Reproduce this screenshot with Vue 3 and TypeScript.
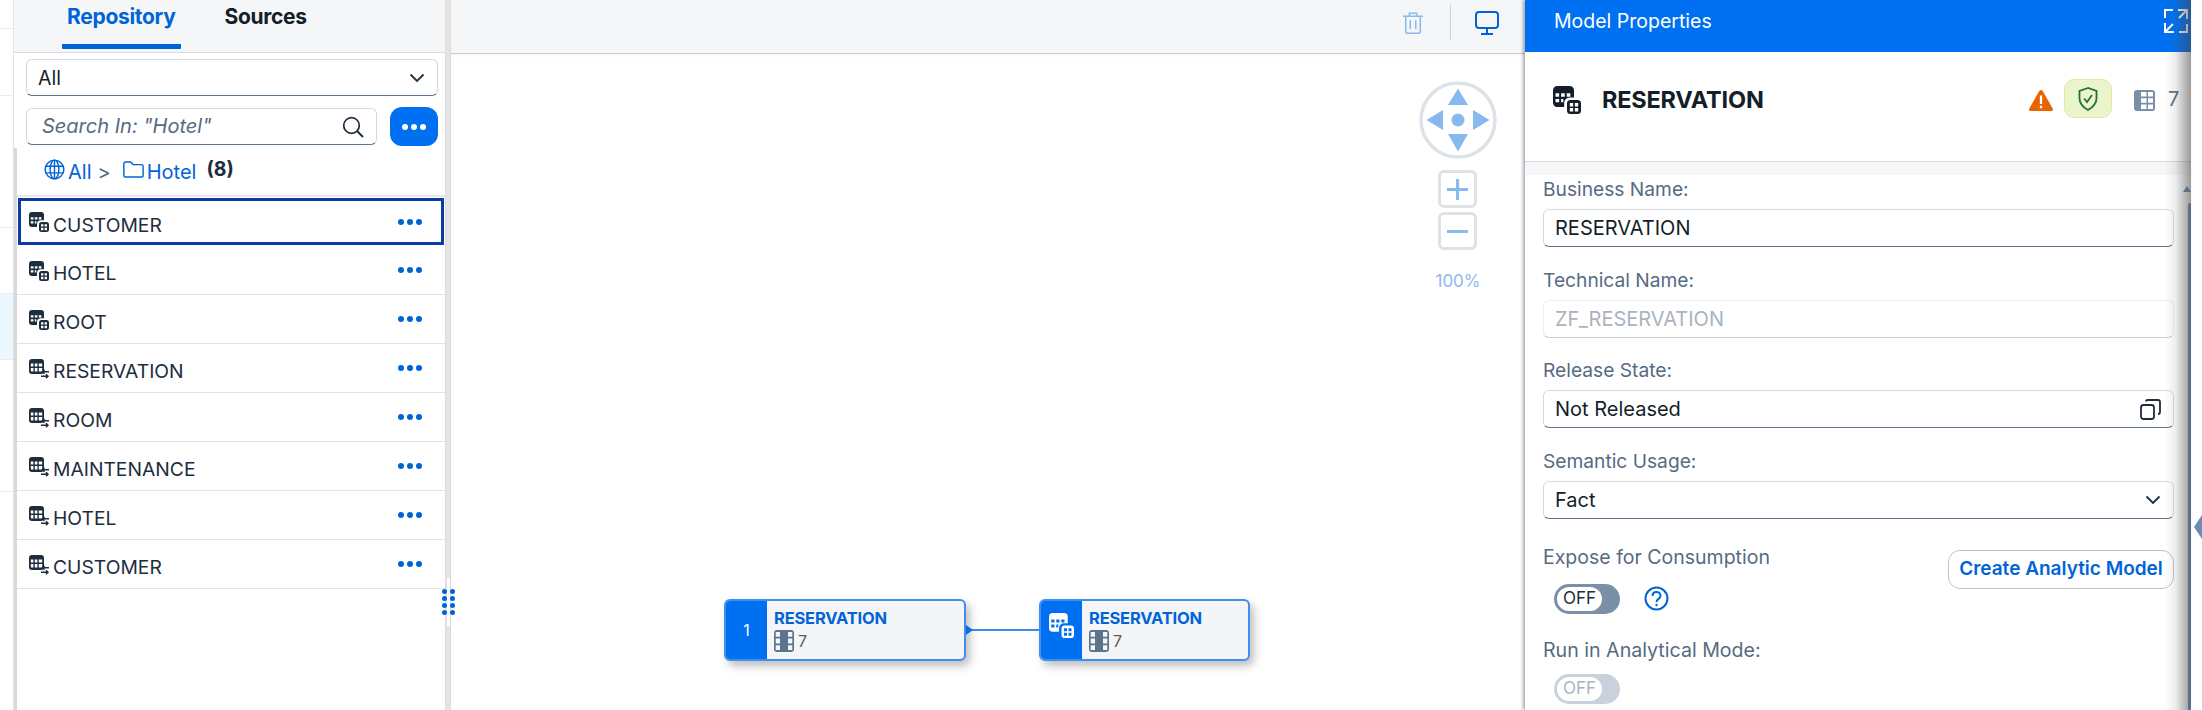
<script setup lang="ts">
interface Row { name: string; kind: 'dim' | 'rel'; selected?: boolean }
const rows: Row[] = [
  { name: 'CUSTOMER', kind: 'dim', selected: true },
  { name: 'HOTEL', kind: 'dim' },
  { name: 'ROOT', kind: 'dim' },
  { name: 'RESERVATION', kind: 'rel' },
  { name: 'ROOM', kind: 'rel' },
  { name: 'MAINTENANCE', kind: 'rel' },
  { name: 'HOTEL', kind: 'rel' },
  { name: 'CUSTOMER', kind: 'rel' },
]
const stripRows: { h: number; tint?: boolean }[] = [
  { h: 29 }, { h: 67 }, { h: 132 }, { h: 66 }, { h: 66, tint: true }, { h: 132 },
]
</script>

<template>
  <div class="app">
    <svg class="defs" aria-hidden="true">
      <symbol id="dim" viewBox="0 0 20 20">
        <path fill="currentColor" fill-rule="evenodd" d="M3 0h9a3 3 0 0 1 3 3v5.2h-3a4 4 0 0 0-4 4V15H3a3 3 0 0 1-3-3V3a3 3 0 0 1 3-3zM1.8 5.2h2.6v2.4H1.8zM5.8 5.2h2.6v2.4H5.8zM9.800 5.200h2.600v2.400H9.800zM1.800 9.200h2.600v2.400H1.800zM5.800 9.200h1.600v2.400H5.800z" />
        <path fill="currentColor" fill-rule="evenodd" d="M12.500 10h5a2.500 2.500 0 0 1 2.500 2.500v5a2.500 2.500 0 0 1-2.500 2.500h-5a2.500 2.500 0 0 1-2.500-2.500v-5a2.500 2.500 0 0 1 2.500-2.500zM12 12.200h2.400v2.400H12zM15.600 12.200H18v2.400h-2.400zM12 15.800h2.400v2.400H12zM15.600 15.800H18v2.400h-2.400z" />
      </symbol>
      <symbol id="rel" viewBox="0 0 20 20">
        <path fill="currentColor" fill-rule="evenodd" d="M3 0h9a3 3 0 0 1 3 3v9a3 3 0 0 1-3 3H3a3 3 0 0 1-3-3V3a3 3 0 0 1 3-3zM1.800 4.500h2.600v3H1.800zM5.800 4.500h2.600v3H5.800zM9.800 4.500h3.400v3H9.800zM1.800 9h2.600v3.600H3a1.200 1.200 0 0 1-1.200-1.200zM5.800 9h2.600v3.600H5.800zM9.800 9h3.400v2.400a1.200 1.200 0 0 1-1.200 1.200H9.800z" />
        <path fill="none" stroke="currentColor" stroke-width="1.500" d="M20 12.800h-6.500M15.500 10.800l-2 2 2 2M12 17.200h7M17 15.200l2 2-2 2" />
      </symbol>
      <symbol id="cols" viewBox="0 0 20 22">
        <path fill="currentColor" fill-rule="evenodd" d="M3 0h14a3 3 0 0 1 3 3v16a3 3 0 0 1-3 3H3a3 3 0 0 1-3-3V3a3 3 0 0 1 3-3zM1.700 2h4.300v4.800H1.700zM14 2h4.300v4.800H14zM1.700 8.600h4.300v4.800H1.700zM14 8.600h4.300v4.800H14zM1.700 15.200h4.300V20H1.700zM14 15.200h4.300V20H14z" />
      </symbol>
      <symbol id="cols2" viewBox="0 0 21 21">
        <path fill="currentColor" fill-rule="evenodd" d="M3 0h15a3 3 0 0 1 3 3v15a3 3 0 0 1-3 3H3a3 3 0 0 1-3-3V3a3 3 0 0 1 3-3zM7 2h5.500v4.500H7zM14 2h5v4.500h-5zM7 8.200h5.500v4.500H7zM14 8.200h5v4.500h-5zM7 14.400h5.500V19H7zM14 14.400h5V19h-5z" />
      </symbol>
    </svg>

    <div class="strip">
      <div v-for="(r, i) in stripRows" :key="i" class="strip-row" :class="{ tint: r.tint }" :style="{ height: r.h + 'px' }"></div>
    </div>

    <aside class="side">
      <div class="tabs">
        <div class="tab active">Repository</div>
        <div class="tab">Sources</div>
      </div>
      <div class="controls">
        <div class="select">
          <span>All</span>
          <svg class="chev" viewBox="0 0 16 10"><path d="M1.500 1.500 8 8l6.500-6.500" fill="none" stroke="currentColor" stroke-width="1.800" /></svg>
        </div>
        <div class="search-row">
          <div class="search">
            <span class="search-text">Search In: "Hotel"</span>
            <svg class="mag" viewBox="0 0 22 22"><circle cx="9.500" cy="9.500" r="7.800" fill="none" stroke="currentColor" stroke-width="1.700" /><path d="m15 15 6 6" stroke="currentColor" stroke-width="1.900" /></svg>
          </div>
          <button class="more-btn"><i></i><i></i><i></i></button>
        </div>
      </div>
      <div class="lower">
        <div class="crumb">
          <svg class="ci" viewBox="0 0 22 22" fill="none" stroke="currentColor" stroke-width="1.500"><circle cx="11" cy="11" r="9.800" /><ellipse cx="11" cy="11" rx="4.600" ry="9.800" /><path d="M1.500 7.500h19M1.500 14.500h19M11 1v20" /></svg>
          <span class="cl">All</span><span class="gt">&gt;</span>
          <svg class="cf" viewBox="0 0 22 18" fill="none" stroke="currentColor" stroke-width="1.500"><path d="M2.500 1h5.500l2.500 2.800h9a1.700 1.700 0 0 1 1.700 1.700V15a2 2 0 0 1-2 2H2.700A2 2 0 0 1 .8 15V2.700A1.700 1.700 0 0 1 2.500 1z" /></svg>
          <span class="cl">Hotel</span><b class="count">(8)</b>
        </div>
        <div v-for="(r, i) in rows" :key="i" class="row" :class="{ selected: r.selected }">
          <svg class="ricon"><use :href="'#' + r.kind" /></svg>
          <span class="rname">{{ r.name }}</span>
          <span class="rdots"><i></i><i></i><i></i></span>
        </div>
      </div>
    </aside>

    <div class="splitter">
      <div class="split-gap"></div>
      <div class="grip"><i v-for="n in 8" :key="n"></i></div>
    </div>

    <main class="canvas">
      <div class="toolbar">
        <svg class="trash" viewBox="0 0 22 24" fill="none" stroke="currentColor" stroke-width="1.700"><path d="M0 4.500h22M7 4.500V1.300h8v3.200M3 4.500v17a1.700 1.700 0 0 0 1.700 1.700h12.600a1.700 1.700 0 0 0 1.700-1.700v-17M8 9v9.500M14 9v9.500" /></svg>
        <span class="tsep"></span>
        <svg class="monitor" viewBox="0 0 24 24" fill="none" stroke="currentColor" stroke-width="2"><rect x="1" y="1" width="22" height="16" rx="3" /><path d="M12 17v5M6 23h12" /></svg>
      </div>

      <svg class="nav" viewBox="0 0 78 78">
        <circle cx="39" cy="39" r="37" fill="#fff" stroke="#dde2e9" stroke-width="3.500" />
        <g fill="#87b8ef">
          <path d="M39 7.500 49 24H29zM39 70.500 29 53h20zM7.500 39 24 29v20zM70.500 39 54 29v20z" />
          <circle cx="39" cy="39" r="6.500" />
        </g>
      </svg>
      <div class="zoomctl plus"><svg viewBox="0 0 24 24"><path d="M12 1v22M1 12h22" stroke="#87b8ef" stroke-width="3" /></svg></div>
      <div class="zoomctl minus"><svg viewBox="0 0 24 24"><path d="M1 12h22" stroke="#87b8ef" stroke-width="3" /></svg></div>
      <div class="pct">100%</div>

      <div class="node n1">
        <div class="nleft">1</div>
        <div class="nbody">
          <div class="ntitle">RESERVATION</div>
          <div class="nmeta"><svg class="ncol"><use href="#cols" /></svg><span>7</span></div>
        </div>
      </div>
      <div class="link"></div>
      <div class="linkarrow"></div>
      <div class="node n2">
        <div class="nleft"><svg class="nicon"><use href="#dim" /></svg></div>
        <div class="nbody">
          <div class="ntitle">RESERVATION</div>
          <div class="nmeta"><svg class="ncol"><use href="#cols" /></svg><span>7</span></div>
        </div>
      </div>
    </main>

    <section class="panel">
      <header class="phead">
        <span>Model Properties</span>
        <svg class="expand" viewBox="0 0 24 24" fill="none" stroke="currentColor" stroke-width="2"><path d="M9 1H1v8M15 23h8v-8M14 1h9v9M23 1l-8 8M1 14v9h9M1 23l8-8" /></svg>
      </header>
      <div class="pinfo">
        <svg class="pdim"><use href="#dim" /></svg>
        <h2 class="ptitle">RESERVATION</h2>
        <svg class="warn" viewBox="0 0 24 21"><path d="M12 0c.8 0 1.300.4 1.700 1l10 17.500c.6 1.200-.1 2.500-1.500 2.500H1.800C.4 21-.3 19.700.3 18.500L10.300 1c.4-.6.900-1 1.700-1z" fill="#e76500" /><path d="M12 5.500v8.500M12 15.700v2.500" stroke="#fff" stroke-width="2.300" /></svg>
        <div class="chip">
          <svg viewBox="0 0 20 24" fill="none" stroke="#256f3a" stroke-width="1.800"><path d="M10 1 1.500 4v7.500c0 5 3.600 8.700 8.500 11.500 4.900-2.800 8.500-6.500 8.500-11.500V4z" /><path d="m6 11.500 3 3.500 5-7" /></svg>
        </div>
        <svg class="pcol"><use href="#cols2" /></svg>
        <span class="pcount">7</span>
      </div>
      <div class="pbody">
        <div class="card">
          <label class="lbl">Business Name:</label>
          <div class="input">RESERVATION</div>
          <label class="lbl">Technical Name:</label>
          <div class="input off">ZF_RESERVATION</div>
          <label class="lbl">Release State:</label>
          <div class="input">
            <span>Not Released</span>
            <svg class="copy" viewBox="0 0 21 21" fill="none" stroke="#1d2d3e" stroke-width="1.800"><rect x="1" y="6" width="13" height="14" rx="2.500" /><path d="M6 2.500A1.500 1.500 0 0 1 7.500 1H18a2 2 0 0 1 2 2v10a2 2 0 0 1-2 2" /></svg>
          </div>
          <label class="lbl">Semantic Usage:</label>
          <div class="input">
            <span>Fact</span>
            <svg class="chev" viewBox="0 0 16 10"><path d="M1.500 1.500 8 8l6.500-6.500" fill="none" stroke="currentColor" stroke-width="1.800" /></svg>
          </div>
          <div class="expose">
            <div>
              <label class="lbl first">Expose for Consumption</label>
              <div class="toggle-row">
                <div class="toggle"><span>OFF</span></div>
                <svg class="help" viewBox="0 0 25 25" fill="none" stroke="currentColor" stroke-width="2"><circle cx="12.500" cy="12.500" r="11" /><path d="M8.500 10c0-2.500 1.800-4 4-4s4 1.500 4 3.700c0 3.300-4 3-4 6.300" /><path d="M12.500 17.800v2.400" /></svg>
              </div>
            </div>
            <button class="create">Create Analytic Model</button>
          </div>
          <label class="lbl run">Run in Analytical Mode:</label>
          <div class="toggle disabled"><span>OFF</span></div>
        </div>
      </div>
      <div class="pshade"></div>
      <div class="scrollup"></div>
      <div class="scrollbar"></div>
    </section>

    <div class="rest"><div class="collapse"></div></div>
  </div>
</template>

<style>
html, body { margin: 0; background: #fff; }
</style>

<style scoped>
* { box-sizing: border-box; }
.app {
  position: relative; display: flex; width: 2202px; height: 710px; overflow: hidden;
  background: #fff; color: #1d2d3e;
  font-family: Inter, "Noto Sans", sans-serif; font-size: 19.500px;
}
.defs { position: absolute; width: 0; height: 0; }
.strip { width: 13px; flex: none; }
.strip-row { border-bottom: 1px solid #ebebeb; }
.strip-row.tint { background: #ebf8ff; }

.side {
  width: 433px; flex: none; display: flex; flex-direction: column;
  border-left: 1px solid #e2e2e2; border-right: 1px solid #dcdcdc;
}
.tabs {
  height: 53px; flex: none; display: flex; padding-left: 48px; gap: 39px;
  background: #f5f6f7; border-bottom: 1px solid #d9d9d9;
}
.tab { height: 49px; padding: 4px 5px 0; font-weight: 700; font-size: 21px; line-height: 26px; letter-spacing: -0.3px; color: #131e29; }
.tab.active { color: #0064d9; border-bottom: 5px solid #0064d9; border-radius: 0 0 1px 1px; }
.controls { padding: 6px 7px 0 12px; height: 95px; flex: none; }
.select, .search, .input {
  display: flex; align-items: center; justify-content: space-between;
  background: #fff; border: 1px solid #d5dae1; border-bottom: 1.500px solid #5b738b; border-radius: 6px;
  color: #131e29;
}
.select { height: 37px; padding: 0 12px 0 11px; }
.chev { width: 16px; height: 10px; color: #1d2d3e; }
.search-row { display: flex; gap: 13px; margin-top: 11px; align-items: center; }
.search { width: 352px; height: 37px; padding: 0 12px 0 15px; font-style: italic; color: #556b82; font-size: 20px; }
.search-text { margin-top: -2px; }
.mag { width: 22px; height: 22px; color: #1d2d3e; }
.more-btn {
  width: 48px; height: 39px; border: 0; border-radius: 12px; background: #0070f2;
  display: flex; align-items: center; justify-content: center; gap: 3px; padding: 0;
}
.more-btn i { width: 6px; height: 6px; border-radius: 50%; background: #fff; }
.lower { flex: 1; border-left: 3px solid #d9d9d9; }
.crumb {
  height: 49px; display: flex; align-items: center; padding-left: 27px;
  border-bottom: 2px solid #e8e8e8; color: #0064d9; font-size: 20px;
}
.ci { width: 21px; height: 21px; margin-top: -5px; flex: none; }
.cl { margin-left: 3px; }
.gt { color: #556b82; margin: 0 12px 0 6px; }
.cf { width: 21px; height: 17px; margin-top: -5px; flex: none; }
.count { color: #1d2d3e; margin-left: 10px; font-size: 19.500px; margin-top: -5px; }
.row {
  position: relative; height: 49px; display: flex; align-items: center; padding: 8px 23px 0 12px;
  border-bottom: 1px solid #e2e2e2; font-size: 19.300px;
}
.row.selected { outline: 3px solid #0a3ba8; outline-offset: -4px; border-bottom: 0; }
.ricon { width: 20px; height: 20px; flex: none; color: #1d2d3e; margin-top: -7px; }
.rname { margin-left: 4px; flex: 1; margin-top: -2px; }
.rdots { display: flex; gap: 3px; margin-top: -8px; }
.rdots i { width: 6px; height: 6px; border-radius: 50%; background: #0064d9; }

.splitter { width: 5px; flex: none; position: relative; z-index: 2; background: #e4e4e4; border-right: 1px solid #dcdcdc; }
.split-gap { position: absolute; left: 1px; top: 578px; width: 3px; height: 48px; background: #fff; }
.grip {
  position: absolute; left: -4px; top: 589px; width: 13px; display: grid;
  grid-template-columns: 5px 5px; column-gap: 3px; row-gap: 2px;
}
.grip i { width: 5px; height: 5px; border-radius: 50%; background: #0064d9; }

.canvas { position: relative; width: 1074px; flex: none; background: #fff; }
.toolbar {
  height: 54px; display: flex; align-items: flex-start; justify-content: flex-end; padding: 11px 26px 0 0;
  background: #f5f6f7; border-bottom: 1px solid #c5cdd6; box-shadow: 0 2px 3px rgba(0,0,0,.03);
}
.trash { width: 20px; height: 24px; color: #8ab8ef; }
.tsep { width: 1px; height: 36px; margin: -7px 24px 0 27px; background: #ccd2d8; }
.monitor { width: 24px; height: 24px; color: #0064d9; }
.nav { position: absolute; left: 968px; top: 81px; width: 78px; height: 78px; }
.zoomctl {
  position: absolute; left: 987px; width: 39px; height: 38px; border: 3px solid #dde2e9; border-radius: 6px;
  background: #fff; display: flex; align-items: center; justify-content: center;
}
.zoomctl svg { width: 23px; height: 23px; }
.plus { top: 170px; }
.minus { top: 212px; }
.pct { position: absolute; left: 968px; width: 78px; top: 270px; text-align: center; color: #8ab8ef; font-size: 17px; line-height: 22px; }

.node {
  position: absolute; top: 599px; height: 62px; display: flex; background: #f4f5f7;
  border: 2px solid #3d8ff0; border-radius: 6px; box-shadow: 4px 5px 9px rgba(0,0,0,.25); overflow: hidden;
}
.n1 { left: 273px; width: 242px; }
.n2 { left: 588px; width: 211px; }
.nleft {
  width: 41px; flex: none; background: #0070f2; color: #fff; font-size: 16px;
  display: flex; align-items: center; justify-content: center;
}
.nicon { width: 25px; height: 25px; color: #fff; margin-bottom: 10px; }
.nbody { padding: 7px 0 0 7px; }
.ntitle { color: #0064d9; font-weight: 700; font-size: 16.500px; line-height: 20px; letter-spacing: -0.2px; }
.nmeta { display: flex; align-items: center; gap: 4px; color: #5b5b5b; font-size: 16px; line-height: 22px; margin-top: 2px; }
.ncol { width: 20px; height: 22px; color: #5b738b; }
.link { position: absolute; left: 514px; top: 629px; width: 76px; height: 2px; background: #3a8bee; }
.linkarrow { position: absolute; left: 515px; top: 625px; border: 5px solid transparent; border-left: 7px solid #0a6ee8; border-right: 0; }

.panel {
  position: relative; width: 666px; flex: none; display: flex; flex-direction: column;
  background: #fff; box-shadow: -2px 0 3px rgba(60,70,80,.45);
}
.phead {
  height: 52px; flex: none; display: flex; align-items: flex-start; justify-content: space-between;
  padding: 9px 3px 0 29px; background: #0070f2; color: #fff; font-size: 19.500px; line-height: 24px;
}
.expand { width: 24px; height: 24px; }
.pinfo {
  height: 110px; flex: none; display: flex; align-items: center; padding: 0 0 15px 28px;
  border-bottom: 1px solid #d9d9d9;
}
.pdim { width: 28px; height: 28px; color: #131e29; flex: none; margin-top: 2px; }
.ptitle { margin: 2px 0 0 21px; font-size: 23.500px; font-weight: 700; line-height: 24px; flex: 1; letter-spacing: -0.2px; color: #131e29; }
.warn { width: 24px; height: 21px; margin-top: 3px; }
.chip {
  width: 48px; height: 39px; margin: -1px 0 0 11px; border-radius: 10px; background: #ebf5cb; border: 1px solid #dbeda0;
  display: flex; align-items: center; justify-content: center;
}
.chip svg { width: 20px; height: 24px; }
.pcol { width: 21px; height: 21px; color: #788fa6; margin: 3px 0 0 22px; }
.pcount { width: 36px; padding-left: 13px; margin-top: -1px; color: #5b738b; font-size: 20px; }
.pbody { flex: 1; background: linear-gradient(#f5f6f7 13px, #fff 13px); padding: 13px 17px 0 9px; }
.card { background: #fff; border-radius: 14px 14px 0 0; padding: 0 7px 0 9px; height: 100%; margin-right: -7px; }
.lbl { display: block; height: 28px; line-height: 28px; color: #556b82; font-size: 19.200px; white-space: nowrap; }
.input { height: 38px; padding: 0 12px 0 11px; margin: 6px 0 18.500px; font-size: 20px; }
.input.off { color: #a9b4be; border-bottom: 1px solid #c5cdd6; border-color: #edeff2; border-bottom-color: #c5cdd6; }
.copy { width: 21px; height: 21px; }
.expose { display: flex; justify-content: space-between; align-items: flex-start; margin-top: 24px; }
.lbl.first { height: 28px; font-size: 19.500px; }
.toggle-row { display: flex; align-items: center; gap: 24px; margin: 13px 0 0 11px; }
.toggle { width: 66px; height: 30px; border-radius: 15px; background: #7a90a8; padding: 3px; }
.toggle span {
  display: block; width: 45px; height: 24px; border-radius: 12px; background: #fff;
  text-align: center; line-height: 23px; font-size: 17px; color: #1d2d3e;
}
.toggle.disabled { background: #c9d2dc; margin-left: 11px; }
.toggle.disabled span { color: #a9b4be; }
.help { width: 25px; height: 25px; color: #0064d9; }
.create {
  width: 226px; height: 39px; margin-top: 7px; border: 1px solid #b9c3cd; border-radius: 12px; background: #fff;
  color: #0064d9; font: 600 19px Inter, sans-serif; padding: 0 0 2px;
}
.lbl.run { margin-top: 22px; margin-bottom: 10px; font-size: 19.600px; }
.pshade {
  position: absolute; right: 0; top: 0; bottom: 0; width: 26px; pointer-events: none;
  background: linear-gradient(90deg, rgba(80,80,80,0), rgba(80,80,80,.1) 40%, rgba(70,70,70,.55));
}
.scrollup { position: absolute; right: 0; top: 186px; border: 4px solid transparent; border-bottom: 6px solid #5b6f87; border-top: 0; }
.scrollbar { position: absolute; right: 0; top: 203px; bottom: 0; width: 3px; background: #5b6f87; border-radius: 2px 0 0 0; }
.rest { flex: 1; position: relative; }
.collapse {
  position: absolute; right: 0; top: 515px; width: 8px; height: 24px; background: #6a8cb5;
  clip-path: polygon(100% 0, 100% 100%, 0 50%);
}
</style>
